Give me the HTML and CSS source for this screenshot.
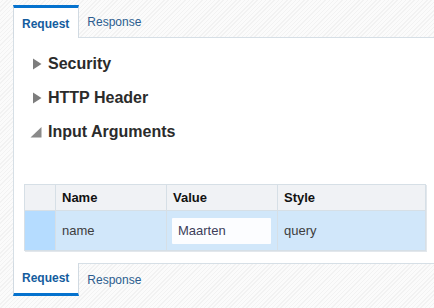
FILE: index.html
```html
<!DOCTYPE html>
<html lang="en">
<head>
  <meta charset="UTF-8" />
  <title>Request / Response</title>
  <link rel="stylesheet" href="styles.css">
</head>
<body>

  <!-- Top tabs -->
  <div class="tabbar top">
    <div class="tab active">Request</div>
    <div class="tab">Response</div>
    <div class="fill"></div>
  </div>

  <!-- Panel -->
  <div class="panel">
    <div class="sections">
      <div class="heading">
        <svg class="arrow" width="12" height="12" viewBox="0 0 12 12"><polygon points="3,0.5 11.5,6 3,11.5" fill="#7d7d7d"/></svg>
        <span>Security</span>
      </div>
      <div class="heading">
        <svg class="arrow" width="12" height="12" viewBox="0 0 12 12"><polygon points="3,0.5 11.5,6 3,11.5" fill="#7d7d7d"/></svg>
        <span>HTTP Header</span>
      </div>
      <div class="heading">
        <svg class="arrow" width="12" height="12" viewBox="0 0 12 12"><polygon points="0.5,11.5 11.5,1 11.5,11.5" fill="#8a8a8a"/></svg>
        <span>Input Arguments</span>
      </div>
    </div>

    <table class="args">
      <thead>
        <tr>
          <th class="sel"></th>
          <th class="c-name">Name</th>
          <th class="c-value">Value</th>
          <th>Style</th>
        </tr>
      </thead>
      <tbody>
        <tr class="selected">
          <td class="sel"></td>
          <td>name</td>
          <td><input class="value" type="text" value="Maarten"></td>
          <td>query</td>
        </tr>
      </tbody>
    </table>
  </div>

  <!-- Bottom tabs -->
  <div class="tabbar bottom">
    <div class="tab active">Request</div>
    <div class="tab">Response</div>
    <div class="fill"></div>
  </div>

</body>
</html>
```

FILE: styles.css
```css
/* ----- Base ----- */
* {
  box-sizing: border-box;
}

html, body {
  margin: 0;
  width: 100%;
  height: 100%;
  overflow: hidden;
}

body {
  padding: 5px 0 0 13px;
  font-family: "Liberation Sans", Arial, sans-serif;
  background: repeating-linear-gradient(-45deg, #f2f2f2 0 1px, #fbfbfb 1px 3px);
}

/* ----- Tab bars ----- */
.tabbar {
  display: flex;
  height: 33px;
}
.tab {
  display: flex;
  align-items: center;
  padding: 0 9px 0 8px;
  font-size: 12px;
  color: #2c5d8f;
}
.tab.active {
  color: #145c9e;
  font-weight: bold;
  background: #fff;
  border-left: 1px solid #d1dae2;
  border-right: 1px solid #d1dae2;
}
.fill {
  flex: 1;
}

.tabbar.top .tab {
  padding-top: 1px;
}
.tabbar.top .tab.active {
  border-top: 3px solid #0572ce;
}
.tabbar.top .tab:not(.active),
.tabbar.top .fill {
  border-bottom: 1px solid #d6dfe6;
}

.tabbar.bottom .tab.active {
  border-bottom: 3px solid #0572ce;
}
.tabbar.bottom .tab:not(.active),
.tabbar.bottom .fill {
  border-top: 1px solid #d6dfe6;
}

/* ----- Panel ----- */
.panel {
  height: 225px;
  background: #fff;
  border-left: 1px solid #d6dfe6;
  padding-top: 16px;
}
.sections {
  padding-left: 16px;
}
.heading {
  display: flex;
  align-items: center;
  gap: 6px;
  height: 20px;
  margin-bottom: 14px;
  font-size: 16px;
  font-weight: bold;
  color: #2b2b2b;
}
.heading:last-child {
  margin-bottom: 0;
}
.arrow {
  flex: none;
}

/* ----- Arguments table ----- */
.args {
  width: calc(100% - 18px);
  margin: 42px 8px 0 10px;
  border-collapse: collapse;
  border: 1px solid #d6dfe6;
  box-shadow: 1px 1px 0 #e2e7ec;
  font-size: 13px;
}
.args th,
.args td {
  border: 1px solid #d6dfe6;
  padding: 0 6px;
  text-align: left;
}
.args th {
  height: 26px;
  background: #f0f2f5;
  color: #111;
  font-weight: bold;
}
.args td {
  height: 40px;
  background: #d1e7fa;
  color: #3d3d3d;
}
.args .sel {
  width: 31px;
}
.args td.sel {
  background: #b5dcff;
}
.args .c-name,
.args .c-value {
  width: 111px;
}
.args td .value {
  display: block;
  width: 99px;
  height: 26px;
  margin-left: -1px;
  border: none;
  border-radius: 1px;
  background: #fcfdff;
  padding: 0 6px;
  font-family: "Liberation Sans", Arial, sans-serif;
  font-size: 13px;
  color: #3d3d5a;
}
```
